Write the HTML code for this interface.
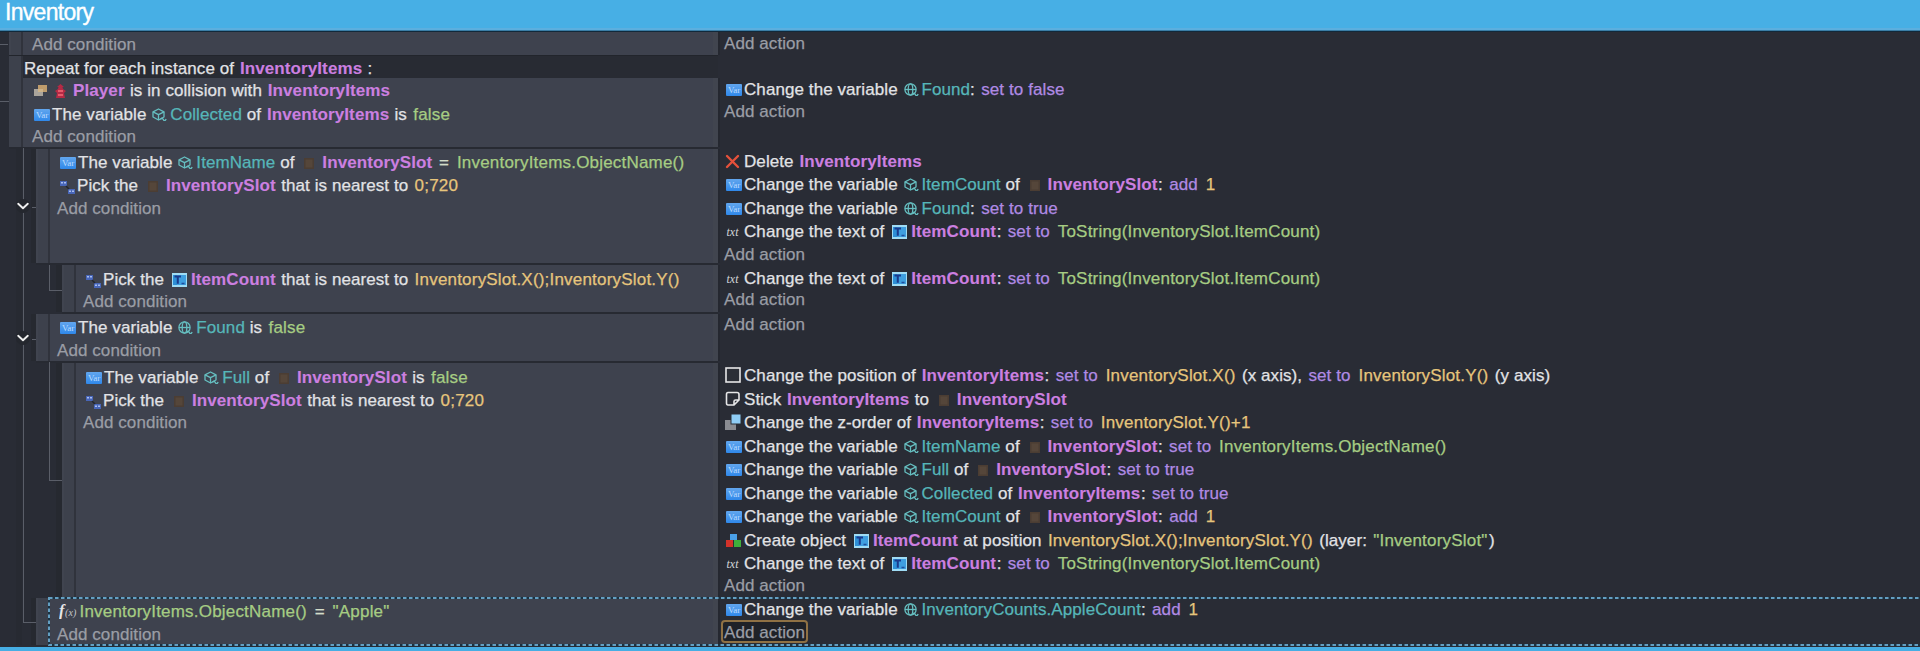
<!DOCTYPE html>
<html><head><meta charset="utf-8"><title>Inventory</title><style>
html,body{margin:0;padding:0;}
body{width:1920px;height:651px;overflow:hidden;background:#292c35;position:relative;font-family:"Liberation Sans",sans-serif;}
.ln{position:absolute;white-space:pre;font-size:17px;line-height:20px;letter-spacing:0.08px;color:#e2e3e6;-webkit-text-stroke:0.25px currentColor;}
.hd{position:absolute;left:5px;top:-2px;font-size:23px;line-height:28px;color:#fff;letter-spacing:-0.7px;-webkit-text-stroke:0.35px #fff}
.w{color:#e2e3e6} .g{color:#9a9da5} .m{color:#cc7fe0;font-weight:bold;letter-spacing:0.1px;padding:0 0.5px 0 1px;-webkit-text-stroke:0.1px currentColor} .t{color:#56b6b9}
.o{color:#b08ae4;padding:0 1.5px;letter-spacing:0.1px} .n{color:#e6c57c;padding:0 1.5px;letter-spacing:0.2px} .s{color:#a6cd83;padding:0 1.5px;letter-spacing:0.2px} .c{padding-left:0} .eq{color:#d3dcc9;padding:0 1.5px}
svg{display:inline-block}
.vi{display:inline-block;width:16px;height:12px;margin-left:1px;vertical-align:-1px;background:linear-gradient(#62a6ee,#2f88ea);border-radius:1px;font-family:'Liberation Serif',serif;font-size:9px;line-height:12px;letter-spacing:-0.2px;text-align:center;color:#bcdcff;-webkit-text-stroke:0;overflow:hidden}
</style></head>
<body>
<div style="position:absolute;left:0px;top:0px;width:1920px;height:28px;background:#47afe5"></div>
<div style="position:absolute;left:0px;top:28px;width:1920px;height:2px;background:#5cafdf"></div>
<div style="position:absolute;left:0px;top:30px;width:1920px;height:1px;background:#3a7ea6"></div>
<div style="position:absolute;left:0px;top:31px;width:1920px;height:1px;background:#12293a"></div>
<div class="hd">Inventory</div>
<div style="position:absolute;left:9px;top:32px;width:12px;height:23px;background:#3d414c"></div>
<div style="position:absolute;left:9px;top:32px;width:2px;height:23px;background:#40444f"></div>
<div style="position:absolute;left:21px;top:32px;width:2px;height:23px;background:#30333c"></div>
<div style="position:absolute;left:23px;top:32px;width:695px;height:23px;background:#3e424e"></div>
<div style="position:absolute;left:713px;top:32px;width:5px;height:23px;background:#41454f"></div>
<div style="position:absolute;left:718px;top:32px;width:2px;height:23px;background:#252830"></div>
<div style="position:absolute;left:0px;top:44px;width:8px;height:1px;background:#5a5e68"></div>
<div style="position:absolute;left:9px;top:56px;width:12px;height:91px;background:#3d414c"></div>
<div style="position:absolute;left:21px;top:56px;width:2px;height:91px;background:#30333c"></div>
<div style="position:absolute;left:23px;top:55px;width:695px;height:23px;background:#282b33"></div>
<div style="position:absolute;left:23px;top:78px;width:695px;height:69px;background:#3e424e"></div>
<div style="position:absolute;left:713px;top:78px;width:5px;height:69px;background:#41454f"></div>
<div style="position:absolute;left:718px;top:78px;width:2px;height:69px;background:#252830"></div>
<div style="position:absolute;left:0px;top:101px;width:9px;height:1px;background:#5a5e68"></div>
<div style="position:absolute;left:9px;top:147px;width:709px;height:2px;background:#272a32"></div>
<div style="position:absolute;left:9px;top:55px;width:709px;height:1px;background:#22252c"></div>
<div style="position:absolute;left:16px;top:148px;width:6px;height:497px;background:#272a32"></div>
<div style="position:absolute;left:31px;top:149px;width:5px;height:114px;background:#262930"></div>
<div style="position:absolute;left:31px;top:314px;width:5px;height:47px;background:#262930"></div>
<div style="position:absolute;left:31px;top:598px;width:5px;height:47px;background:#262930"></div>
<div style="position:absolute;left:56px;top:265px;width:6px;height:47px;background:#262930"></div>
<div style="position:absolute;left:56px;top:363px;width:6px;height:234px;background:#262930"></div>
<div style="position:absolute;left:36px;top:149px;width:12px;height:114px;background:#3d414c"></div>
<div style="position:absolute;left:36px;top:149px;width:2px;height:114px;background:#40444f"></div>
<div style="position:absolute;left:48px;top:149px;width:2px;height:114px;background:#30333c"></div>
<div style="position:absolute;left:50px;top:149px;width:668px;height:114px;background:#3e424e"></div>
<div style="position:absolute;left:713px;top:149px;width:5px;height:114px;background:#41454f"></div>
<div style="position:absolute;left:718px;top:149px;width:2px;height:114px;background:#252830"></div>
<div style="position:absolute;left:36px;top:263px;width:682px;height:2px;background:#272a32"></div>
<div style="position:absolute;left:62px;top:265px;width:12px;height:47px;background:#3d414c"></div>
<div style="position:absolute;left:62px;top:265px;width:2px;height:47px;background:#40444f"></div>
<div style="position:absolute;left:74px;top:265px;width:2px;height:47px;background:#30333c"></div>
<div style="position:absolute;left:76px;top:265px;width:642px;height:47px;background:#3e424e"></div>
<div style="position:absolute;left:713px;top:265px;width:5px;height:47px;background:#41454f"></div>
<div style="position:absolute;left:718px;top:265px;width:2px;height:47px;background:#252830"></div>
<div style="position:absolute;left:49px;top:265px;width:1px;height:26px;background:#5a5e68"></div>
<div style="position:absolute;left:49px;top:290px;width:13px;height:1px;background:#5a5e68"></div>
<div style="position:absolute;left:62px;top:312px;width:656px;height:2px;background:#272a32"></div>
<div style="position:absolute;left:36px;top:314px;width:12px;height:47px;background:#3d414c"></div>
<div style="position:absolute;left:36px;top:314px;width:2px;height:47px;background:#40444f"></div>
<div style="position:absolute;left:48px;top:314px;width:2px;height:47px;background:#30333c"></div>
<div style="position:absolute;left:50px;top:314px;width:668px;height:47px;background:#3e424e"></div>
<div style="position:absolute;left:713px;top:314px;width:5px;height:47px;background:#41454f"></div>
<div style="position:absolute;left:718px;top:314px;width:2px;height:47px;background:#252830"></div>
<div style="position:absolute;left:36px;top:361px;width:682px;height:2px;background:#272a32"></div>
<div style="position:absolute;left:62px;top:363px;width:12px;height:234px;background:#3d414c"></div>
<div style="position:absolute;left:62px;top:363px;width:2px;height:234px;background:#40444f"></div>
<div style="position:absolute;left:74px;top:363px;width:2px;height:234px;background:#30333c"></div>
<div style="position:absolute;left:76px;top:363px;width:642px;height:234px;background:#3e424e"></div>
<div style="position:absolute;left:713px;top:363px;width:5px;height:234px;background:#41454f"></div>
<div style="position:absolute;left:718px;top:363px;width:2px;height:234px;background:#252830"></div>
<div style="position:absolute;left:49px;top:362px;width:1px;height:118px;background:#5a5e68"></div>
<div style="position:absolute;left:49px;top:480px;width:13px;height:1px;background:#5a5e68"></div>
<div style="position:absolute;left:36px;top:598px;width:12px;height:47px;background:#3d414c"></div>
<div style="position:absolute;left:36px;top:598px;width:2px;height:47px;background:#40444f"></div>
<div style="position:absolute;left:48px;top:598px;width:2px;height:47px;background:#30333c"></div>
<div style="position:absolute;left:50px;top:598px;width:668px;height:47px;background:#3e424e"></div>
<div style="position:absolute;left:713px;top:598px;width:5px;height:47px;background:#41454f"></div>
<div style="position:absolute;left:718px;top:598px;width:2px;height:47px;background:#252830"></div>
<div style="position:absolute;left:23px;top:148px;width:1px;height:474px;background:#5a5e68"></div>
<div style="position:absolute;left:23px;top:622px;width:13px;height:1px;background:#5a5e68"></div>
<div style="position:absolute;left:32px;top:207px;width:4px;height:1px;background:#5a5e68"></div>
<div style="position:absolute;left:32px;top:339px;width:4px;height:1px;background:#5a5e68"></div>
<svg style="position:absolute;left:0;top:0" width="1920" height="651"><rect x="49" y="598" width="1880" height="47" fill="none" stroke="#1a3242" stroke-width="2"/><rect x="49" y="598" width="1880" height="47" fill="none" stroke="#649fc2" stroke-width="2" stroke-dasharray="3.5 2.5"/></svg>
<div style="position:absolute;left:0px;top:647px;width:1920px;height:4px;background:#46aee4"></div>
<div style="position:absolute;left:16px;top:199px;width:14px;height:14px;border-radius:7px;background:#24272e"></div><svg style="position:absolute;left:17px;top:202px" width="12" height="8" viewBox="0 0 12 8"><path d="M1.2 1.8 L6 6.3 L10.8 1.8" fill="none" stroke="#f0f0f0" stroke-width="1.9" stroke-linecap="round" stroke-linejoin="round"/></svg>
<div style="position:absolute;left:16px;top:331px;width:14px;height:14px;border-radius:7px;background:#24272e"></div><svg style="position:absolute;left:17px;top:334px" width="12" height="8" viewBox="0 0 12 8"><path d="M1.2 1.8 L6 6.3 L10.8 1.8" fill="none" stroke="#f0f0f0" stroke-width="1.9" stroke-linecap="round" stroke-linejoin="round"/></svg>
<div style="position:absolute;left:721px;top:620px;width:83px;height:19px;border:2px solid #8f7144;border-radius:4px;background:#1f2228"></div>
<div class="ln" style="left:32px;top:35px"><span class="g">Add condition</span></div>
<div class="ln" style="left:724px;top:34px"><span class="g">Add action</span></div>
<div class="ln" style="left:24px;top:59px"><span class="w">Repeat for each instance of </span><span class="m">InventoryItems</span><span class="w"> :</span></div>
<div class="ln" style="left:34px;top:81px"><svg width="13" height="11" viewBox="0 0 13 11" style="vertical-align:0px;margin-left:0px;margin-right:8px"><rect x="4" y="0" width="9" height="7" fill="#bf9c6c"/><rect x="0" y="4" width="9" height="7" fill="#aaa49b"/><rect x="4" y="4" width="5" height="3" fill="#cdb38a"/></svg><svg width="11" height="15" viewBox="0 0 11 15" style="vertical-align:-3px;margin-left:0px;margin-right:6px"><path d="M5.5 0 L9 3 L7.5 3 L8 5 L11 7 L9 9 L10 14 L1 14 L2 9 L0 7 L3 5 L3.5 3 L2 3 Z" fill="#b52a45"/><rect x="3" y="6" width="5" height="2" fill="#e65a6a"/><rect x="3" y="10" width="5" height="2" fill="#e65a6a"/></svg><span class="m">Player</span><span class="w"> is in collision with </span><span class="m">InventoryItems</span></div>
<div class="ln" style="left:33px;top:104.5px"><span class="vi" style="margin-right:2px">Var</span><span class="w">The variable </span><svg width="15" height="13" viewBox="0 0 15 13" style="vertical-align:-1px;margin-left:1px;margin-right:3px"><g fill="none" stroke="#66bfc1" stroke-width="1.3" stroke-linejoin="round"><path d="M6.5 1 L12 3.8 L12 9 L6.5 12 L1 9 L1 3.8 Z"/><path d="M1 3.8 L6.5 6.6 L12 3.8 M6.5 6.6 L6.5 12"/></g><path d="M8.5 11.5 q1.4 -2.6 2.8 0 t2.8 -0.5" fill="none" stroke="#66bfc1" stroke-width="1.4"/></svg><span class="t">Collected</span><span class="w"> of </span><span class="m">InventoryItems</span><span class="w"> is </span><span class="s">false</span></div>
<div class="ln" style="left:32px;top:126.5px"><span class="g">Add condition</span></div>
<div class="ln" style="left:725px;top:80px"><span class="vi" style="margin-right:2px">Var</span><span class="w">Change the variable </span><svg width="15" height="13" viewBox="0 0 15 13" style="vertical-align:-1px;margin-left:1px;margin-right:3px"><g fill="none" stroke="#66bfc1" stroke-width="1.3"><circle cx="6.5" cy="6.5" r="5.6"/><ellipse cx="6.5" cy="6.5" rx="2.3" ry="5.6"/><path d="M1 6.5 H12"/></g><path d="M8.5 11.5 q1.4 -2.6 2.8 0 t2.8 -0.5" fill="none" stroke="#66bfc1" stroke-width="1.4"/></svg><span class="t">Found</span><span class="w c">: </span><span class="o">set to false</span></div>
<div class="ln" style="left:724px;top:101.6px"><span class="g">Add action</span></div>
<div class="ln" style="left:59px;top:153px"><span class="vi" style="margin-right:2px">Var</span><span class="w">The variable </span><svg width="15" height="13" viewBox="0 0 15 13" style="vertical-align:-1px;margin-left:1px;margin-right:3px"><g fill="none" stroke="#66bfc1" stroke-width="1.3" stroke-linejoin="round"><path d="M6.5 1 L12 3.8 L12 9 L6.5 12 L1 9 L1 3.8 Z"/><path d="M1 3.8 L6.5 6.6 L12 3.8 M6.5 6.6 L6.5 12"/></g><path d="M8.5 11.5 q1.4 -2.6 2.8 0 t2.8 -0.5" fill="none" stroke="#66bfc1" stroke-width="1.4"/></svg><span class="t">ItemName</span><span class="w"> of </span><svg width="10" height="11" viewBox="0 0 10 11" style="vertical-align:-1px;margin-left:5px;margin-right:7px"><rect x="0" y="0" width="10" height="11" fill="#4b3d33"/><rect x="1.5" y="1.5" width="7" height="8" fill="#55463a"/></svg><span class="m">InventorySlot</span><span class="w"> </span><span class="eq">=</span><span class="w"> </span><span class="s">InventoryItems.ObjectName()</span></div>
<div class="ln" style="left:59px;top:176px"><svg width="17" height="15" viewBox="0 0 17 15" style="vertical-align:-3px;margin-left:0px;margin-right:1px"><rect x="1" y="2" width="7" height="5" fill="#4866b8"/><rect x="2" y="3" width="2" height="1.5" fill="#a9bdf0"/><rect x="5" y="3" width="2" height="1.5" fill="#a9bdf0"/><rect x="9" y="10" width="7" height="5" fill="#4866b8"/><rect x="10" y="11.5" width="2" height="1.5" fill="#a9bdf0"/><rect x="13" y="11.5" width="2" height="1.5" fill="#a9bdf0"/><path d="M7 7 L10 10" stroke="#23262d" stroke-width="1.5"/></svg><span class="w">Pick the </span><svg width="10" height="11" viewBox="0 0 10 11" style="vertical-align:-1px;margin-left:5px;margin-right:7px"><rect x="0" y="0" width="10" height="11" fill="#4b3d33"/><rect x="1.5" y="1.5" width="7" height="8" fill="#55463a"/></svg><span class="m">InventorySlot</span><span class="w"> that is nearest to </span><span class="n">0;720</span></div>
<div class="ln" style="left:57px;top:199px"><span class="g">Add condition</span></div>
<div class="ln" style="left:725px;top:152px"><svg width="15" height="15" viewBox="0 0 15 15" style="vertical-align:-2px;margin-left:0px;margin-right:4px"><path d="M2 2 L13 13 M13 2 L2 13" stroke="#e5513b" stroke-width="2.4" stroke-linecap="round"/></svg><span class="w">Delete </span><span class="m">InventoryItems</span></div>
<div class="ln" style="left:725px;top:175.2px"><span class="vi" style="margin-right:2px">Var</span><span class="w">Change the variable </span><svg width="15" height="13" viewBox="0 0 15 13" style="vertical-align:-1px;margin-left:1px;margin-right:3px"><g fill="none" stroke="#66bfc1" stroke-width="1.3" stroke-linejoin="round"><path d="M6.5 1 L12 3.8 L12 9 L6.5 12 L1 9 L1 3.8 Z"/><path d="M1 3.8 L6.5 6.6 L12 3.8 M6.5 6.6 L6.5 12"/></g><path d="M8.5 11.5 q1.4 -2.6 2.8 0 t2.8 -0.5" fill="none" stroke="#66bfc1" stroke-width="1.4"/></svg><span class="t">ItemCount</span><span class="w"> of </span><svg width="10" height="11" viewBox="0 0 10 11" style="vertical-align:-1px;margin-left:5px;margin-right:7px"><rect x="0" y="0" width="10" height="11" fill="#4b3d33"/><rect x="1.5" y="1.5" width="7" height="8" fill="#55463a"/></svg><span class="m">InventorySlot</span><span class="w c">: </span><span class="o">add</span><span class="w"> </span><span class="n">1</span></div>
<div class="ln" style="left:725px;top:198.6px"><span class="vi" style="margin-right:2px">Var</span><span class="w">Change the variable </span><svg width="15" height="13" viewBox="0 0 15 13" style="vertical-align:-1px;margin-left:1px;margin-right:3px"><g fill="none" stroke="#66bfc1" stroke-width="1.3"><circle cx="6.5" cy="6.5" r="5.6"/><ellipse cx="6.5" cy="6.5" rx="2.3" ry="5.6"/><path d="M1 6.5 H12"/></g><path d="M8.5 11.5 q1.4 -2.6 2.8 0 t2.8 -0.5" fill="none" stroke="#66bfc1" stroke-width="1.4"/></svg><span class="t">Found</span><span class="w c">: </span><span class="o">set to true</span></div>
<div class="ln" style="left:725px;top:222.2px"><svg width="17" height="13" viewBox="0 0 17 13" style="vertical-align:-1px;margin-left:0px;margin-right:2px"><text x="1.5" y="11" font-family="Liberation Serif" font-style="italic" font-size="12.5" fill="#d4d5d9" textLength="12" lengthAdjust="spacingAndGlyphs">txt</text></svg><span class="w">Change the text of </span><svg width="15" height="14" viewBox="0 0 15 14" style="vertical-align:-2px;margin-left:3px;margin-right:3px"><rect x="0" y="0" width="15" height="14" fill="#9fdcf5"/><rect x="1" y="2" width="13" height="10" fill="#3f9fe0"/><rect x="1" y="2" width="4" height="10" fill="#2d8fd6"/><path d="M2.5 3.5 H9 M5.8 3.5 V10.8" stroke="#1a3a8c" stroke-width="2"/><path d="M9.5 10.5 h3" stroke="#1f4f9c" stroke-width="1.5"/></svg><span class="m">ItemCount</span><span class="w c">: </span><span class="o">set to</span><span class="w"> </span><span class="s">ToString(InventorySlot.ItemCount)</span></div>
<div class="ln" style="left:724px;top:244.5px"><span class="g">Add action</span></div>
<div class="ln" style="left:85px;top:270px"><svg width="17" height="15" viewBox="0 0 17 15" style="vertical-align:-3px;margin-left:0px;margin-right:1px"><rect x="1" y="2" width="7" height="5" fill="#4866b8"/><rect x="2" y="3" width="2" height="1.5" fill="#a9bdf0"/><rect x="5" y="3" width="2" height="1.5" fill="#a9bdf0"/><rect x="9" y="10" width="7" height="5" fill="#4866b8"/><rect x="10" y="11.5" width="2" height="1.5" fill="#a9bdf0"/><rect x="13" y="11.5" width="2" height="1.5" fill="#a9bdf0"/><path d="M7 7 L10 10" stroke="#23262d" stroke-width="1.5"/></svg><span class="w">Pick the </span><svg width="15" height="14" viewBox="0 0 15 14" style="vertical-align:-2px;margin-left:3px;margin-right:3px"><rect x="0" y="0" width="15" height="14" fill="#9fdcf5"/><rect x="1" y="2" width="13" height="10" fill="#3f9fe0"/><rect x="1" y="2" width="4" height="10" fill="#2d8fd6"/><path d="M2.5 3.5 H9 M5.8 3.5 V10.8" stroke="#1a3a8c" stroke-width="2"/><path d="M9.5 10.5 h3" stroke="#1f4f9c" stroke-width="1.5"/></svg><span class="m">ItemCount</span><span class="w"> that is nearest to </span><span class="n">InventorySlot.X();InventorySlot.Y()</span></div>
<div class="ln" style="left:83px;top:292px"><span class="g">Add condition</span></div>
<div class="ln" style="left:725px;top:268.6px"><svg width="17" height="13" viewBox="0 0 17 13" style="vertical-align:-1px;margin-left:0px;margin-right:2px"><text x="1.5" y="11" font-family="Liberation Serif" font-style="italic" font-size="12.5" fill="#d4d5d9" textLength="12" lengthAdjust="spacingAndGlyphs">txt</text></svg><span class="w">Change the text of </span><svg width="15" height="14" viewBox="0 0 15 14" style="vertical-align:-2px;margin-left:3px;margin-right:3px"><rect x="0" y="0" width="15" height="14" fill="#9fdcf5"/><rect x="1" y="2" width="13" height="10" fill="#3f9fe0"/><rect x="1" y="2" width="4" height="10" fill="#2d8fd6"/><path d="M2.5 3.5 H9 M5.8 3.5 V10.8" stroke="#1a3a8c" stroke-width="2"/><path d="M9.5 10.5 h3" stroke="#1f4f9c" stroke-width="1.5"/></svg><span class="m">ItemCount</span><span class="w c">: </span><span class="o">set to</span><span class="w"> </span><span class="s">ToString(InventorySlot.ItemCount)</span></div>
<div class="ln" style="left:724px;top:290.2px"><span class="g">Add action</span></div>
<div class="ln" style="left:59px;top:317.8px"><span class="vi" style="margin-right:2px">Var</span><span class="w">The variable </span><svg width="15" height="13" viewBox="0 0 15 13" style="vertical-align:-1px;margin-left:1px;margin-right:3px"><g fill="none" stroke="#66bfc1" stroke-width="1.3"><circle cx="6.5" cy="6.5" r="5.6"/><ellipse cx="6.5" cy="6.5" rx="2.3" ry="5.6"/><path d="M1 6.5 H12"/></g><path d="M8.5 11.5 q1.4 -2.6 2.8 0 t2.8 -0.5" fill="none" stroke="#66bfc1" stroke-width="1.4"/></svg><span class="t">Found</span><span class="w"> is </span><span class="s">false</span></div>
<div class="ln" style="left:57px;top:340.9px"><span class="g">Add condition</span></div>
<div class="ln" style="left:724px;top:315.4px"><span class="g">Add action</span></div>
<div class="ln" style="left:85px;top:367.6px"><span class="vi" style="margin-right:2px">Var</span><span class="w">The variable </span><svg width="15" height="13" viewBox="0 0 15 13" style="vertical-align:-1px;margin-left:1px;margin-right:3px"><g fill="none" stroke="#66bfc1" stroke-width="1.3" stroke-linejoin="round"><path d="M6.5 1 L12 3.8 L12 9 L6.5 12 L1 9 L1 3.8 Z"/><path d="M1 3.8 L6.5 6.6 L12 3.8 M6.5 6.6 L6.5 12"/></g><path d="M8.5 11.5 q1.4 -2.6 2.8 0 t2.8 -0.5" fill="none" stroke="#66bfc1" stroke-width="1.4"/></svg><span class="t">Full</span><span class="w"> of </span><svg width="10" height="11" viewBox="0 0 10 11" style="vertical-align:-1px;margin-left:5px;margin-right:7px"><rect x="0" y="0" width="10" height="11" fill="#4b3d33"/><rect x="1.5" y="1.5" width="7" height="8" fill="#55463a"/></svg><span class="m">InventorySlot</span><span class="w"> is </span><span class="s">false</span></div>
<div class="ln" style="left:85px;top:390.7px"><svg width="17" height="15" viewBox="0 0 17 15" style="vertical-align:-3px;margin-left:0px;margin-right:1px"><rect x="1" y="2" width="7" height="5" fill="#4866b8"/><rect x="2" y="3" width="2" height="1.5" fill="#a9bdf0"/><rect x="5" y="3" width="2" height="1.5" fill="#a9bdf0"/><rect x="9" y="10" width="7" height="5" fill="#4866b8"/><rect x="10" y="11.5" width="2" height="1.5" fill="#a9bdf0"/><rect x="13" y="11.5" width="2" height="1.5" fill="#a9bdf0"/><path d="M7 7 L10 10" stroke="#23262d" stroke-width="1.5"/></svg><span class="w">Pick the </span><svg width="10" height="11" viewBox="0 0 10 11" style="vertical-align:-1px;margin-left:5px;margin-right:7px"><rect x="0" y="0" width="10" height="11" fill="#4b3d33"/><rect x="1.5" y="1.5" width="7" height="8" fill="#55463a"/></svg><span class="m">InventorySlot</span><span class="w"> that is nearest to </span><span class="n">0;720</span></div>
<div class="ln" style="left:83px;top:412.8px"><span class="g">Add condition</span></div>
<div class="ln" style="left:725px;top:366px"><svg width="16" height="16" viewBox="0 0 16 16" style="vertical-align:-2px;margin-left:0px;margin-right:3px"><rect x="1" y="1" width="14" height="14" fill="#2b2e36" stroke="#e6e6e8" stroke-width="1.6"/></svg><span class="w">Change the position of </span><span class="m">InventoryItems</span><span class="w c">: </span><span class="o">set to</span><span class="w"> </span><span class="n">InventorySlot.X()</span><span class="w"> (x axis), </span><span class="o">set to</span><span class="w"> </span><span class="n">InventorySlot.Y()</span><span class="w"> (y axis)</span></div>
<div class="ln" style="left:725px;top:390px"><svg width="16" height="16" viewBox="0 0 16 16" style="vertical-align:-2px;margin-left:0px;margin-right:3px"><path d="M3 1.5 H12 Q14 1.5 14 3.5 V9 L9 14 H3 Q1.5 14 1.5 12 V3.5 Q1.5 1.5 3 1.5 Z M9 14 V10.5 Q9 9 10.5 9 H14" fill="none" stroke="#e6e6e8" stroke-width="1.6"/></svg><span class="w">Stick </span><span class="m">InventoryItems</span><span class="w"> to </span><svg width="10" height="11" viewBox="0 0 10 11" style="vertical-align:-1px;margin-left:5px;margin-right:7px"><rect x="0" y="0" width="10" height="11" fill="#4b3d33"/><rect x="1.5" y="1.5" width="7" height="8" fill="#55463a"/></svg><span class="m">InventorySlot</span></div>
<div class="ln" style="left:725px;top:413px"><svg width="16" height="16" viewBox="0 0 16 16" style="vertical-align:-2px;margin-left:0px;margin-right:3px"><rect x="0" y="6" width="11" height="10" fill="#8a8c92"/><rect x="6" y="0" width="10" height="10" fill="#8fcdf6" stroke="#2b2e36" stroke-width="1"/></svg><span class="w">Change the z-order of </span><span class="m">InventoryItems</span><span class="w c">: </span><span class="o">set to</span><span class="w"> </span><span class="n">InventorySlot.Y()+1</span></div>
<div class="ln" style="left:725px;top:437px"><span class="vi" style="margin-right:2px">Var</span><span class="w">Change the variable </span><svg width="15" height="13" viewBox="0 0 15 13" style="vertical-align:-1px;margin-left:1px;margin-right:3px"><g fill="none" stroke="#66bfc1" stroke-width="1.3" stroke-linejoin="round"><path d="M6.5 1 L12 3.8 L12 9 L6.5 12 L1 9 L1 3.8 Z"/><path d="M1 3.8 L6.5 6.6 L12 3.8 M6.5 6.6 L6.5 12"/></g><path d="M8.5 11.5 q1.4 -2.6 2.8 0 t2.8 -0.5" fill="none" stroke="#66bfc1" stroke-width="1.4"/></svg><span class="t">ItemName</span><span class="w"> of </span><svg width="10" height="11" viewBox="0 0 10 11" style="vertical-align:-1px;margin-left:5px;margin-right:7px"><rect x="0" y="0" width="10" height="11" fill="#4b3d33"/><rect x="1.5" y="1.5" width="7" height="8" fill="#55463a"/></svg><span class="m">InventorySlot</span><span class="w c">: </span><span class="o">set to</span><span class="w"> </span><span class="s">InventoryItems.ObjectName()</span></div>
<div class="ln" style="left:725px;top:460px"><span class="vi" style="margin-right:2px">Var</span><span class="w">Change the variable </span><svg width="15" height="13" viewBox="0 0 15 13" style="vertical-align:-1px;margin-left:1px;margin-right:3px"><g fill="none" stroke="#66bfc1" stroke-width="1.3" stroke-linejoin="round"><path d="M6.5 1 L12 3.8 L12 9 L6.5 12 L1 9 L1 3.8 Z"/><path d="M1 3.8 L6.5 6.6 L12 3.8 M6.5 6.6 L6.5 12"/></g><path d="M8.5 11.5 q1.4 -2.6 2.8 0 t2.8 -0.5" fill="none" stroke="#66bfc1" stroke-width="1.4"/></svg><span class="t">Full</span><span class="w"> of </span><svg width="10" height="11" viewBox="0 0 10 11" style="vertical-align:-1px;margin-left:5px;margin-right:7px"><rect x="0" y="0" width="10" height="11" fill="#4b3d33"/><rect x="1.5" y="1.5" width="7" height="8" fill="#55463a"/></svg><span class="m">InventorySlot</span><span class="w c">: </span><span class="o">set to true</span></div>
<div class="ln" style="left:725px;top:484px"><span class="vi" style="margin-right:2px">Var</span><span class="w">Change the variable </span><svg width="15" height="13" viewBox="0 0 15 13" style="vertical-align:-1px;margin-left:1px;margin-right:3px"><g fill="none" stroke="#66bfc1" stroke-width="1.3" stroke-linejoin="round"><path d="M6.5 1 L12 3.8 L12 9 L6.5 12 L1 9 L1 3.8 Z"/><path d="M1 3.8 L6.5 6.6 L12 3.8 M6.5 6.6 L6.5 12"/></g><path d="M8.5 11.5 q1.4 -2.6 2.8 0 t2.8 -0.5" fill="none" stroke="#66bfc1" stroke-width="1.4"/></svg><span class="t">Collected</span><span class="w"> of </span><span class="m">InventoryItems</span><span class="w c">: </span><span class="o">set to true</span></div>
<div class="ln" style="left:725px;top:507px"><span class="vi" style="margin-right:2px">Var</span><span class="w">Change the variable </span><svg width="15" height="13" viewBox="0 0 15 13" style="vertical-align:-1px;margin-left:1px;margin-right:3px"><g fill="none" stroke="#66bfc1" stroke-width="1.3" stroke-linejoin="round"><path d="M6.5 1 L12 3.8 L12 9 L6.5 12 L1 9 L1 3.8 Z"/><path d="M1 3.8 L6.5 6.6 L12 3.8 M6.5 6.6 L6.5 12"/></g><path d="M8.5 11.5 q1.4 -2.6 2.8 0 t2.8 -0.5" fill="none" stroke="#66bfc1" stroke-width="1.4"/></svg><span class="t">ItemCount</span><span class="w"> of </span><svg width="10" height="11" viewBox="0 0 10 11" style="vertical-align:-1px;margin-left:5px;margin-right:7px"><rect x="0" y="0" width="10" height="11" fill="#4b3d33"/><rect x="1.5" y="1.5" width="7" height="8" fill="#55463a"/></svg><span class="m">InventorySlot</span><span class="w c">: </span><span class="o">add</span><span class="w"> </span><span class="n">1</span></div>
<div class="ln" style="left:725px;top:531px"><svg width="17" height="15" viewBox="0 0 17 15" style="vertical-align:-2px;margin-left:0px;margin-right:2px"><rect x="5" y="1" width="7" height="6" fill="#4aa0e8"/><rect x="1" y="7" width="7" height="7" fill="#d2322a"/><rect x="9" y="7" width="7" height="7" fill="#3fae3b"/></svg><span class="w">Create object </span><svg width="15" height="14" viewBox="0 0 15 14" style="vertical-align:-2px;margin-left:3px;margin-right:3px"><rect x="0" y="0" width="15" height="14" fill="#9fdcf5"/><rect x="1" y="2" width="13" height="10" fill="#3f9fe0"/><rect x="1" y="2" width="4" height="10" fill="#2d8fd6"/><path d="M2.5 3.5 H9 M5.8 3.5 V10.8" stroke="#1a3a8c" stroke-width="2"/><path d="M9.5 10.5 h3" stroke="#1f4f9c" stroke-width="1.5"/></svg><span class="m">ItemCount</span><span class="w"> at position </span><span class="n">InventorySlot.X();InventorySlot.Y()</span><span class="w"> (layer: </span><span class="s">&quot;InventorySlot&quot;</span><span class="w">)</span></div>
<div class="ln" style="left:725px;top:554px"><svg width="17" height="13" viewBox="0 0 17 13" style="vertical-align:-1px;margin-left:0px;margin-right:2px"><text x="1.5" y="11" font-family="Liberation Serif" font-style="italic" font-size="12.5" fill="#d4d5d9" textLength="12" lengthAdjust="spacingAndGlyphs">txt</text></svg><span class="w">Change the text of </span><svg width="15" height="14" viewBox="0 0 15 14" style="vertical-align:-2px;margin-left:3px;margin-right:3px"><rect x="0" y="0" width="15" height="14" fill="#9fdcf5"/><rect x="1" y="2" width="13" height="10" fill="#3f9fe0"/><rect x="1" y="2" width="4" height="10" fill="#2d8fd6"/><path d="M2.5 3.5 H9 M5.8 3.5 V10.8" stroke="#1a3a8c" stroke-width="2"/><path d="M9.5 10.5 h3" stroke="#1f4f9c" stroke-width="1.5"/></svg><span class="m">ItemCount</span><span class="w c">: </span><span class="o">set to</span><span class="w"> </span><span class="s">ToString(InventorySlot.ItemCount)</span></div>
<div class="ln" style="left:724px;top:576px"><span class="g">Add action</span></div>
<div class="ln" style="left:59px;top:602px"><svg width="18" height="15" viewBox="0 0 18 15" style="vertical-align:-2px;margin-left:0px;margin-right:1px"><text x="0" y="12" font-family="Liberation Serif" font-style="italic" font-weight="bold" font-size="16" fill="#e6e6e8">f</text><text x="6" y="12" font-family="Liberation Serif" font-style="italic" font-size="10" fill="#c7c8cc">(x)</text></svg><span class="s">InventoryItems.ObjectName()</span><span class="w"> </span><span class="eq">=</span><span class="w"> </span><span class="s">&quot;Apple&quot;</span></div>
<div class="ln" style="left:57px;top:624.6px"><span class="g">Add condition</span></div>
<div class="ln" style="left:725px;top:600.4px"><span class="vi" style="margin-right:2px">Var</span><span class="w">Change the variable </span><svg width="15" height="13" viewBox="0 0 15 13" style="vertical-align:-1px;margin-left:1px;margin-right:3px"><g fill="none" stroke="#66bfc1" stroke-width="1.3"><circle cx="6.5" cy="6.5" r="5.6"/><ellipse cx="6.5" cy="6.5" rx="2.3" ry="5.6"/><path d="M1 6.5 H12"/></g><path d="M8.5 11.5 q1.4 -2.6 2.8 0 t2.8 -0.5" fill="none" stroke="#66bfc1" stroke-width="1.4"/></svg><span class="t">InventoryCounts.AppleCount</span><span class="w c">: </span><span class="o">add</span><span class="w"> </span><span class="n">1</span></div>
<div class="ln" style="left:724px;top:622.8px"><span class="g">Add action</span></div>
</body></html>
